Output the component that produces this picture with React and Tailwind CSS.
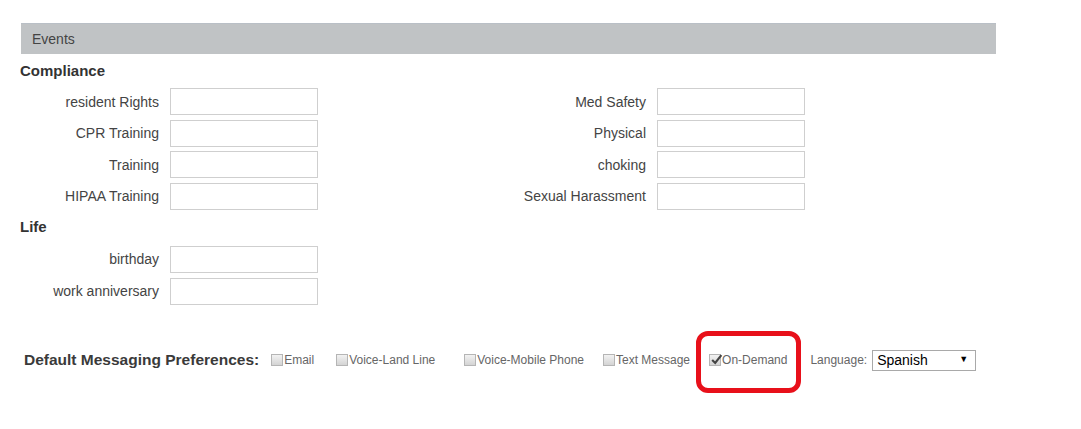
import React from "react";

const font = { fontFamily: '"Liberation Sans", Arial, sans-serif' };

function Field({ label, labelWidth }) {
  return (
    <div className="flex items-center">
      <div
        className="text-right text-[14px] text-[#444] leading-none"
        style={{ width: labelWidth }}
      >
        {label}
      </div>
      <div className="ml-[11px] h-[27px] w-[148px] border border-[#cfcfcf] bg-white" />
    </div>
  );
}

function Box({ checked }) {
  return (
    <span className="relative inline-flex h-[12px] w-[12px] shrink-0 items-center justify-center border border-[#b5b5b5] bg-gradient-to-b from-[#f2f2f2] to-[#d4d4d4]">
      {checked && (
        <svg viewBox="0 0 12 12" className="absolute -top-[2px] left-0 h-[13px] w-[13px]">
          <path d="M2 6.5 L4.8 9.2 L10.5 2" fill="none" stroke="#444" strokeWidth="2" />
        </svg>
      )}
    </span>
  );
}

function Option({ label, checked, className = "" }) {
  return (
    <label className={"flex items-center text-[12px] text-[#666] " + className}>
      <Box checked={checked} />
      <span className="ml-px leading-none">{label}</span>
    </label>
  );
}

export default function App() {
  return (
    <div className="min-h-[429px] w-[1081px] bg-white pt-[23px]" style={font}>
      <div className="ml-[21px] flex h-[31px] w-[975px] items-center border-t border-[#b9bfc6] bg-[#c0c3c5] pl-[11px] text-[14px] text-[#444]">
        Events
      </div>

      <div className="ml-[20px] flex h-[34px] items-center text-[15px] font-bold text-[#333]">
        Compliance
      </div>
      <div className="ml-[20px] flex flex-col gap-[4.5px]">
        <div className="flex">
          <Field label="resident Rights" labelWidth={139} />
          <Field label="Med Safety" labelWidth={328} />
        </div>
        <div className="flex">
          <Field label="CPR Training" labelWidth={139} />
          <Field label="Physical" labelWidth={328} />
        </div>
        <div className="flex">
          <Field label="Training" labelWidth={139} />
          <Field label="choking" labelWidth={328} />
        </div>
        <div className="flex">
          <Field label="HIPAA Training" labelWidth={139} />
          <Field label="Sexual Harassment" labelWidth={328} />
        </div>
      </div>

      <div className="ml-[20px] flex h-[36px] items-center text-[15px] font-bold text-[#333]">
        Life
      </div>
      <div className="ml-[20px] flex flex-col gap-[5px]">
        <Field label="birthday" labelWidth={139} />
        <Field label="work anniversary" labelWidth={139} />
      </div>

      <div className="ml-[24px] mt-[45px] flex h-[21px] items-center">
        <span className="text-[15.5px] font-bold text-[#3a3a3a]">Default Messaging Preferences:</span>
        <Option label="Email" className="ml-[12px]" />
        <Option label="Voice-Land Line" className="ml-[22px]" />
        <Option label="Voice-Mobile Phone" className="ml-[29px]" />
        <Option label="Text Message" className="ml-[19px]" />
        <div className="relative ml-[19px]">
          <Option label="On-Demand" checked />
          <div className="pointer-events-none absolute -left-[13px] -right-[14px] -top-[23px] -bottom-[27px] rounded-[12px] border-[5px] border-[#e8101a]" />
        </div>
        <span className="ml-[23px] text-[12px] text-[#666]">Language:</span>
        <div className="ml-[5px] flex h-[21px] w-[104px] items-center justify-between border border-[#a9a9a9] bg-white pl-[4px] pr-[7px]">
          <span className="text-[14px] text-black">Spanish</span>
          <span className="text-[9px] text-black">▼</span>
        </div>
      </div>
    </div>
  );
}
